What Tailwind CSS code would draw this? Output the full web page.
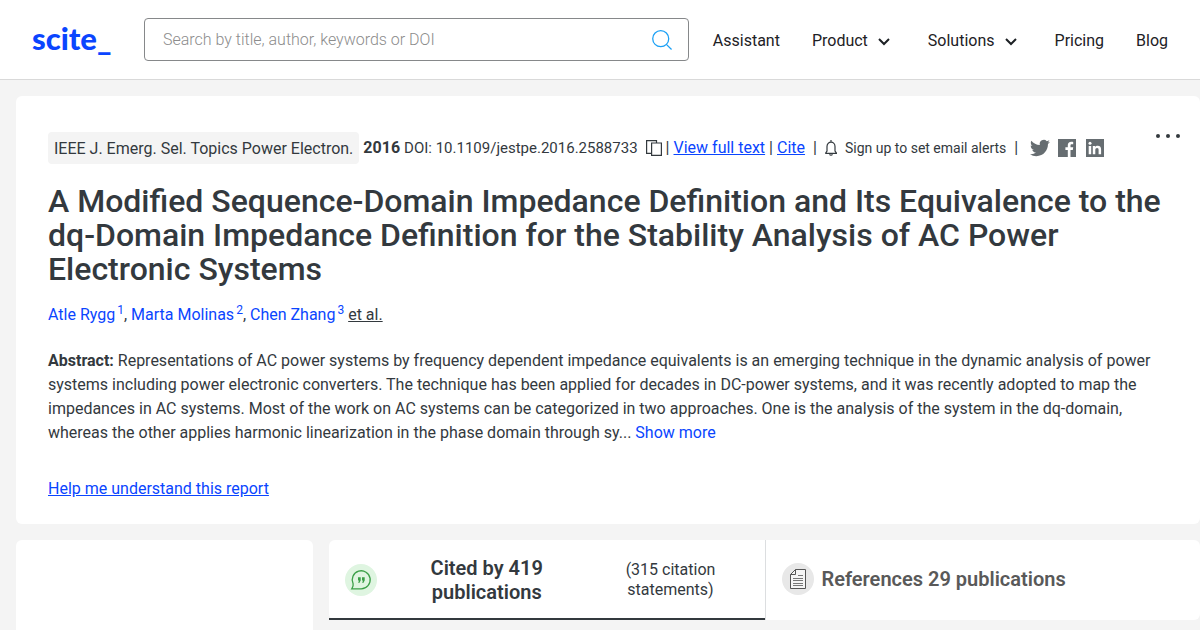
<!DOCTYPE html>
<html lang="en">
<head>
<meta charset="utf-8">
<meta name="viewport" content="width=device-width, initial-scale=1">
<title>scite_</title>
<script src="https://cdn.jsdelivr.net/npm/@tailwindcss/browser@4"></script>
</head>
<body class="flex min-h-screen flex-col overflow-x-hidden bg-[#f4f4f4] font-['Roboto','Liberation_Sans',sans-serif] text-base text-[#33393e]">
<header class="flex h-20 items-center border-b border-[#d9d9d9] bg-white px-8 text-[#1d2125]">
  <a href="#" class="w-28 shrink-0 pb-1 font-['Lato',sans-serif] text-[31px] leading-8 font-black text-[#0a45ff]" aria-label="scite home">scite_</a>
  <form class="flex h-[43px] flex-1 items-center rounded border border-[#86888a] bg-white pr-3">
    <input type="search" aria-label="Search" placeholder="Search by title, author, keywords or DOI" class="h-full min-w-0 flex-1 px-[18px] font-light outline-none placeholder:text-[#8c8c8c]">
    <button type="button" aria-label="Search" class="p-1"><svg class="size-[20px]" viewBox="0 0 22 22" fill="none" stroke="#1ba0f5" stroke-width="1.400"><circle cx="9.600" cy="9.600" r="8.800"/><path d="M15.800 15.800 21.500 21.500"/></svg></button>
  </form>
  <nav class="ml-6 flex items-center gap-8 pt-[2px]">
    <a href="#">Assistant</a>
    <button type="button" class="flex items-center gap-2 pr-1">Product <svg class="size-4" viewBox="0 0 16 16" fill="none" stroke="#1d2125" stroke-width="2"><path d="m3 6 5 5 5-5"/></svg></button>
    <button type="button" class="flex items-center gap-2 pr-1">Solutions <svg class="size-4" viewBox="0 0 16 16" fill="none" stroke="#1d2125" stroke-width="2"><path d="m3 6 5 5 5-5"/></svg></button>
    <a href="#">Pricing</a>
    <a href="#">Blog</a>
  </nav>
</header>
<main class="flex flex-1 flex-col pt-4 pl-4">
  <article class="rounded-md bg-white px-8 pt-9 pb-6">
    <div class="flex items-start justify-between">
      <div class="flex h-8 items-center whitespace-nowrap">
        <span class="rounded bg-[#f4f4f4] px-[6px] pt-[5px] pb-[3px]">IEEE J. Emerg. Sel. Topics Power Electron.</span>
        <b class="ml-1">2016</b><span class="ml-1 text-[15px]">DOI: 10.1109/jestpe.2016.2588733</span>
        <button type="button" aria-label="Copy DOI" class="ml-2"><svg class="h-4 w-4" viewBox="0 0 16 16" fill="none" stroke="#33393e" stroke-width="1.200"><path d="M10.500 3V.6H.6v12.800h5"/><path d="M5.600 3h9.800v12.400H5.600z"/></svg></button>
        <span class="ml-1">|</span>
        <a href="#" class="ml-1 text-[#0a45ff] underline">View full text</a><span class="ml-1">|</span>
        <a href="#" class="ml-1 text-[#0a45ff] underline">Cite</a><span class="ml-2">|</span>
        <button type="button" class="ml-2 flex items-center gap-2 text-sm"><svg class="h-[17px] w-3" viewBox="0 0 12 17" fill="none" stroke="#33393e" stroke-width="1.200"><path d="M6 0v2M.3 13.400h11.400L10 11V6.500a4 4.300 0 0 0-8 0V11L.4 13.400M4.600 14.300a1.500 1.500 0 0 0 2.800 0"/></svg>Sign up to set email alerts</button>
        <span class="ml-2">|</span>
        <div class="ml-3 flex items-center gap-2 text-[#666d71]">
          <a href="#" aria-label="Twitter"><svg class="size-5" viewBox="0 0 24 24" fill="currentColor"><path d="M23.950 4.570a10 10 0 0 1-2.820.77 4.960 4.960 0 0 0 2.160-2.720c-.95.550-2 .96-3.130 1.180a4.920 4.920 0 0 0-8.380 4.480C7.690 8.100 4.070 6.130 1.640 3.160a4.820 4.820 0 0 0-.67 2.480c0 1.710.87 3.210 2.190 4.100a4.900 4.900 0 0 1-2.230-.62v.06a4.920 4.920 0 0 0 3.950 4.830 5 5 0 0 1-2.210.08 4.940 4.940 0 0 0 4.600 3.420A9.870 9.870 0 0 1 0 19.540a14 14 0 0 0 7.550 2.210c9.050 0 14-7.500 14-13.980v-.64a9.940 9.940 0 0 0 2.400-2.560z"/></svg></a>
          <a href="#" aria-label="Facebook"><svg class="size-[18px]" viewBox="0 0 18 18" fill="currentColor"><path d="M0 0h18v18h-5.500v-7h2.300l.4-2.700h-2.700V6.600c0-.8.300-1.300 1.400-1.300h1.300V2.900c-.4 0-1.100-.1-1.900-.1-2.200 0-3.500 1.200-3.500 3.500v2H7.400V11h2.400v7H0z"/></svg></a>
          <a href="#" aria-label="LinkedIn" class="ml-[2px]"><svg class="size-[18px]" viewBox="0 0 18 18"><path fill="currentColor" d="M0 0h18v18H0z"/><path fill="#fff" d="M2.700 7h2.500v8.300H2.700zM6.800 7h2.400v1.100c.5-.8 1.300-1.300 2.500-1.300 2.500 0 3.400 1.400 3.400 3.900v4.600h-2.500v-4.100c0-1.300-.3-2.200-1.500-2.200s-1.800.8-1.800 2.200v4.100H6.800z"/><circle cx="4" cy="4.200" r="1.500" fill="#fff"/></svg></a>
        </div>
      </div>
      <button type="button" aria-label="More actions" class="-mr-3"><svg class="h-2 w-6" viewBox="0 0 24 8" fill="#33393e"><circle cx="2" cy="4" r="2"/><circle cx="12" cy="4" r="2"/><circle cx="22" cy="4" r="2"/></svg></button>
    </div>
    <h1 class="mt-5 text-[32px] leading-[34px] font-medium whitespace-nowrap">A Modified Sequence-Domain Impedance Definition and Its Equivalence to the<br>dq-Domain Impedance Definition for the Stability Analysis of AC Power<br>Electronic Systems</h1>
    <p class="mt-[17px] leading-6"><a href="#" class="text-[#0a45ff]">Atle Rygg<sup class="ml-[2px] text-xs">1</sup></a>, <a href="#" class="text-[#0a45ff]">Marta Molinas<sup class="ml-[2px] text-xs">2</sup></a>, <a href="#" class="text-[#0a45ff]">Chen Zhang<sup class="ml-[2px] text-xs">3</sup></a> <a href="#" class="underline">et al.</a></p>
    <p class="mt-[22px] leading-6 whitespace-nowrap"><b>Abstract:</b> Representations of AC power systems by frequency dependent impedance equivalents is an emerging technique in the dynamic analysis of power<br>systems including power electronic converters. The technique has been applied for decades in DC-power systems, and it was recently adopted to map the<br>impedances in AC systems. Most of the work on AC systems can be categorized in two approaches. One is the analysis of the system in the dq-domain,<br>whereas the other applies harmonic linearization in the phase domain through sy... <a href="#" class="text-[#0a45ff]">Show more</a></p>
    <p class="mt-8 -mb-px leading-6"><a href="#" class="text-[#0a45ff] underline">Help me understand this report</a></p>
  </article>
  <div class="mt-4 flex flex-1 items-start gap-4">
    <aside class="w-[297px] shrink-0 self-stretch rounded-t-md bg-white"></aside>
    <div class="grid h-20 flex-1 grid-cols-2 rounded-md bg-white" role="tablist">
      <button type="button" role="tab" aria-selected="true" class="flex items-center border-b-2 border-[#33393e] px-4 pt-[2px] text-center">
        <svg class="size-8 shrink-0" viewBox="0 0 32 32"><circle cx="16" cy="16" r="16" fill="#dff5e1"/><path fill="none" stroke="#3a9f47" stroke-width="1.300" d="M6.800 24.800h9.400a9 9 0 1 0-8.100-5.100c.4 1.700-.3 3.600-1.300 5.100z"/><path fill="#3a9f47" d="M13 13.300h2.700v3.200l-1.400 2.400h-1l.6-2.400H13zM17 13.300h2.700v3.200l-1.400 2.400h-1l.6-2.400H17z"/></svg>
        <span class="flex-1 text-xl leading-6 font-semibold">Cited by 419<br>publications</span>
        <span class="w-38 pr-1 leading-5">(315 citation<br>statements)</span>
      </button>
      <button type="button" role="tab" aria-selected="false" class="flex items-center gap-2 border-l border-[#dcdee0] px-4 pb-[2px] text-[#595959]">
        <svg class="size-8 shrink-0" viewBox="0 0 32 32"><circle cx="16" cy="16" r="16" fill="#e8e8e8"/><path fill="#f5f5f5" stroke="#555" d="M13.500 6.500h10v19h-15v-14zv5h-5"/><path stroke="#777" d="M16 12.500h5M11 15.500h10M11 17.500h10M11 20.500h10M11 22.500h10"/></svg>
        <span class="text-xl leading-6 font-semibold">References 29 publications</span>
      </button>
    </div>
  </div>
</main>
</body>
</html>
